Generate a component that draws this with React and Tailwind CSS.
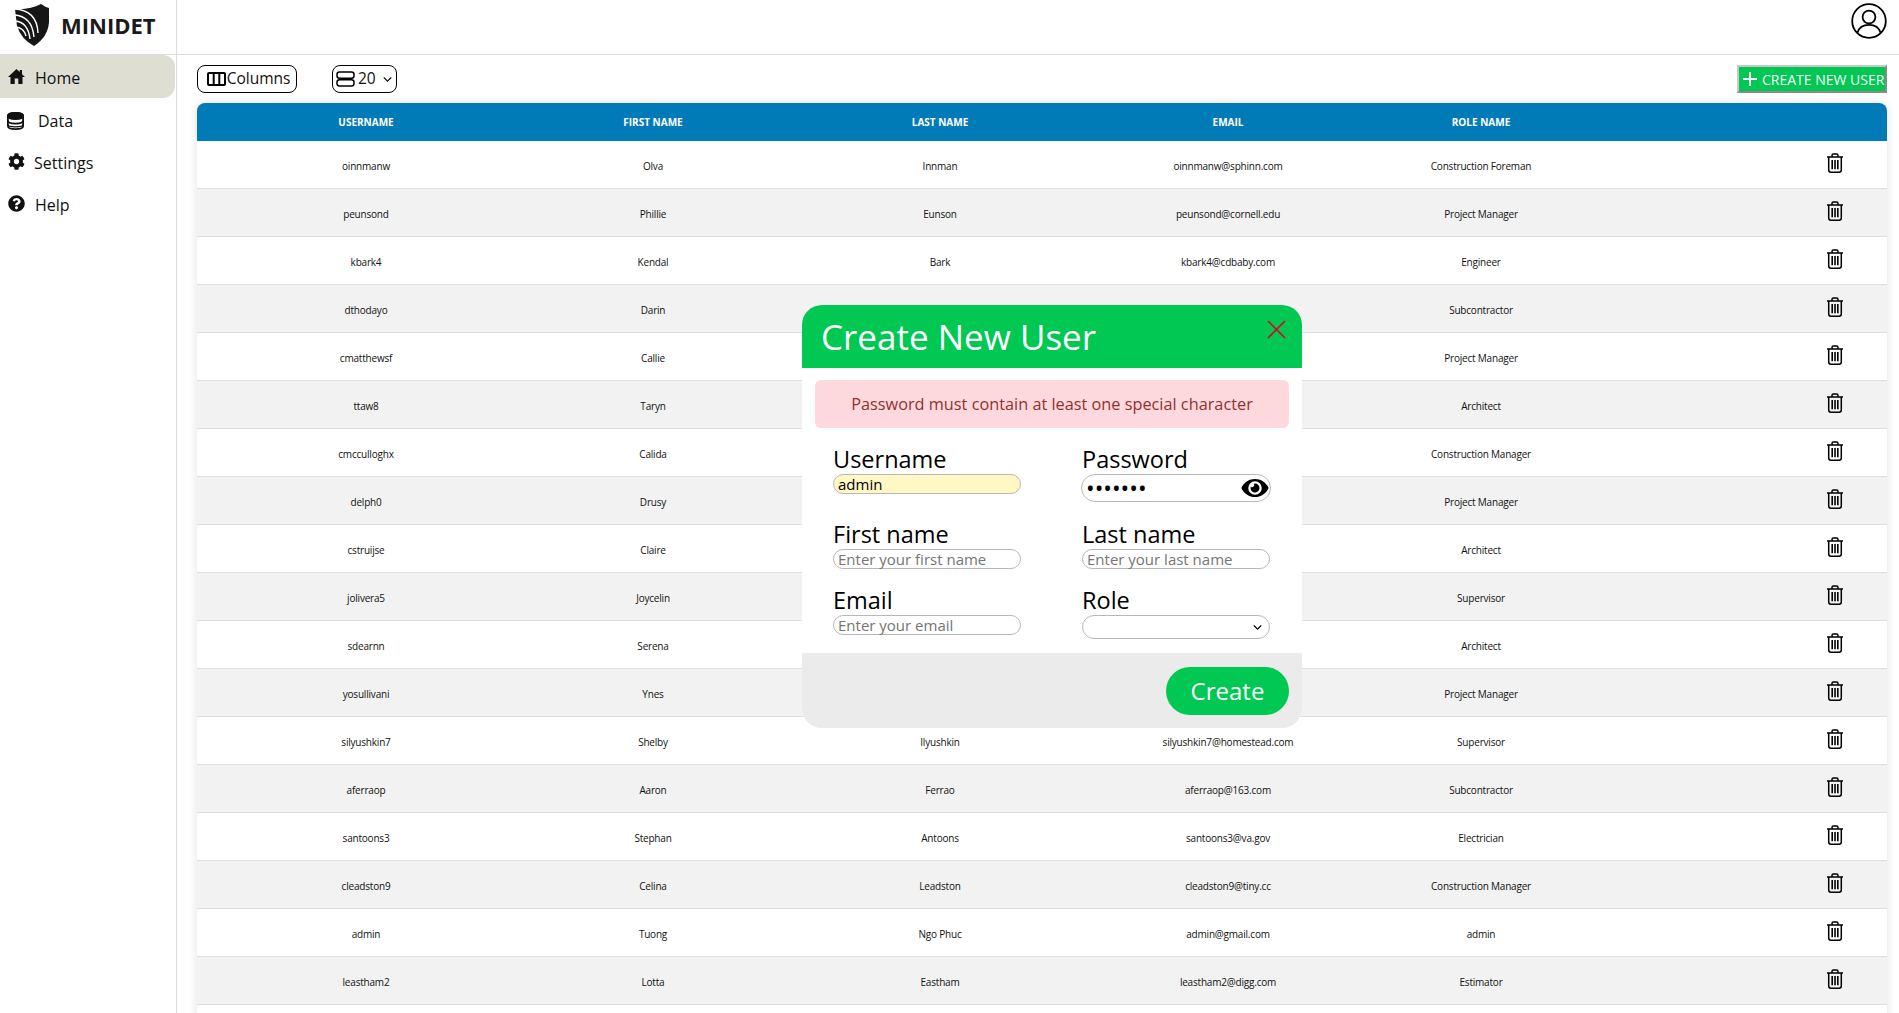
import React from "react";
import { FaCog, FaQuestionCircle, FaEye } from "react-icons/fa";
import { BsChevronDown } from "react-icons/bs";

const rows = [
  ["oinnmanw", "Olva", "Innman", "oinnmanw@sphinn.com", "Construction Foreman"],
  ["peunsond", "Phillie", "Eunson", "peunsond@cornell.edu", "Project Manager"],
  ["kbark4", "Kendal", "Bark", "kbark4@cdbaby.com", "Engineer"],
  ["dthodayo", "Darin", "", "", "Subcontractor"],
  ["cmatthewsf", "Callie", "", "", "Project Manager"],
  ["ttaw8", "Taryn", "", "", "Architect"],
  ["cmcculloghx", "Calida", "", "", "Construction Manager"],
  ["delph0", "Drusy", "", "", "Project Manager"],
  ["cstruijse", "Claire", "", "", "Architect"],
  ["jolivera5", "Joycelin", "", "", "Supervisor"],
  ["sdearnn", "Serena", "", "", "Architect"],
  ["yosullivani", "Ynes", "", "", "Project Manager"],
  ["silyushkin7", "Shelby", "Ilyushkin", "silyushkin7@homestead.com", "Supervisor"],
  ["aferraop", "Aaron", "Ferrao", "aferraop@163.com", "Subcontractor"],
  ["santoons3", "Stephan", "Antoons", "santoons3@va.gov", "Electrician"],
  ["cleadston9", "Celina", "Leadston", "cleadston9@tiny.cc", "Construction Manager"],
  ["admin", "Tuong", "Ngo Phuc", "admin@gmail.com", "admin"],
  ["leastham2", "Lotta", "Eastham", "leastham2@digg.com", "Estimator"],
];

const cols = "grid grid-cols-[338px_236px_338px_238px_268px_1fr] items-center text-center";
const font = { fontFamily: '"Open Sans", "Noto Sans", sans-serif' };

function Logo() {
  return (
    <svg width="36" height="42" viewBox="0 0 36 42" className="shrink-0">
      <path d="M1 5 Q16 6 27 0 Q31 3 35 4 L35 18 Q34 33 20 42 Q7 35 3 22 Z" fill="#161616" />
      <path d="M0 5 Q23 6 24 29 M0 11 Q18 12 20 33 M1 17 Q14 18 16 35 M2 23 Q10 24 12 32" stroke="#fff" strokeWidth="1.4" fill="none" />
    </svg>
  );
}

function HomeIcon() {
  return (
    <svg width="17" height="15" viewBox="0 0 17 15">
      <path d="M8.5 0 L0 8 H2.5 V15 H6.7 V9.5 H10.3 V15 H14.5 V8 H17 L14 5.2 V1 H11.7 V3 Z" fill="#111" />
    </svg>
  );
}

function DbIcon() {
  return (
    <svg width="19" height="20" viewBox="0 0 19 20" fill="none" stroke="#111" strokeWidth="2">
      <path d="M1 4.5 C1 2 5 1 9.5 1 C14 1 18 2 18 4.5 V15.5 C18 18 14 19 9.5 19 C5 19 1 18 1 15.5 Z" fill="#fff" />
      <path d="M1 4.5 C1 7 5 8 9.5 8 C14 8 18 7 18 4.5 C18 2 14 1 9.5 1 C5 1 1 2 1 4.5 Z" fill="#111" />
      <path d="M1 9.5 C1 12 5 13 9.5 13 C14 13 18 12 18 9.5" />
      <path d="M1 14 C1 16 5 16.6 9.5 16.6 C14 16.6 18 16 18 14" strokeWidth="1.4" />
    </svg>
  );
}

function ColumnsIcon() {
  return (
    <svg width="19" height="14" viewBox="0 0 19 14" fill="none" stroke="#000" strokeWidth="2" className="shrink-0">
      <rect x="1" y="1" width="17" height="12" rx="1" />
      <path d="M6.7 1 V13 M12.3 1 V13" />
    </svg>
  );
}

function RowsIcon() {
  return (
    <svg width="19" height="16" viewBox="0 0 19 16" fill="none" stroke="#000" strokeWidth="1.5" className="shrink-0">
      <rect x="1" y="1" width="17" height="6.3" rx="2.5" />
      <rect x="1" y="8.7" width="17" height="6.3" rx="2.5" />
    </svg>
  );
}

function TrashIcon() {
  return (
    <svg width="18" height="20" viewBox="0 0 18 20" fill="none" stroke="#000" strokeWidth="1.5">
      <path d="M1 4 H17" />
      <path d="M6 4 V2.5 Q6 1 7.5 1 H10.5 Q12 1 12 2.5 V4" />
      <path d="M2.7 4 V17 Q2.7 19.2 5 19.2 H13 Q15.3 19.2 15.3 17 V4" />
      <path d="M6.2 7 V16.2 M9 7 V16.2 M11.8 7 V16.2" strokeWidth="1.6" />
    </svg>
  );
}

function ProfileIcon() {
  return (
    <svg width="36" height="36" viewBox="0 0 36 36" fill="none" stroke="#000" strokeWidth="1.8">
      <circle cx="18" cy="18" r="16.8" />
      <circle cx="18" cy="14" r="6.4" />
      <path d="M6.6 29.5 C8 24.5 12 21.8 18 21.8 C24 21.8 28 24.5 29.4 29.5" />
    </svg>
  );
}

function NavItem({ icon, label, active, gap, className }) {
  return (
    <div className={`flex h-[43px] items-center rounded-r-[12px] pl-[8px] text-[16px] text-[#111] ${active ? "bg-[#deded3]" : ""} ${className || ""}`}>
      <span className="flex w-[17px] justify-center">{icon}</span>
      <span className={gap}>{label}</span>
    </div>
  );
}

function Field({ label, children, className }) {
  return (
    <div className={className}>
      <div className="h-[26px] text-[23.5px] leading-[22px] text-black">{label}</div>
      {children}
    </div>
  );
}

function TextInput({ placeholder, value, yellow }) {
  return (
    <div className={`h-[20px] w-[188px] rounded-full border border-[#b8b8b8] pl-[4px] text-[15px] leading-[19px] ${yellow ? "bg-[#fff8c4] text-black" : "bg-white text-[#757575]"}`}>
      {value || placeholder}
    </div>
  );
}

export default function App() {
  return (
    <div className="relative flex h-screen w-full flex-col overflow-hidden bg-white" style={font}>
      <header className="flex h-[55px] shrink-0 border-b border-[#dddddd]">
        <div className="flex w-[177px] shrink-0 items-center gap-[11px] border-r border-[#dddddd] pb-[4px] pl-[14px]">
          <Logo />
          <span className="text-[22px] font-bold text-[#1a1a1a]">MINIDET</span>
        </div>
        <div className="flex flex-1 justify-end pr-[12px] pt-[3px]">
          <ProfileIcon />
        </div>
      </header>

      <div className="flex min-h-0 flex-1">
        <aside className="w-[177px] shrink-0 border-r border-[#dddddd] pr-[1px]">
          <NavItem icon={<HomeIcon />} label="Home" active gap="ml-[10px] pt-[2px]" />
          <NavItem icon={<DbIcon />} label="Data" gap="ml-[14px]" className="-ml-[1px] mt-[1px]" />
          <NavItem icon={<FaCog className="-mt-[3px] h-[17px] w-[17px]" />} label="Settings" gap="ml-[9px]" className="-mt-[1px]" />
          <NavItem icon={<FaQuestionCircle className="-mt-[2px] h-[17px] w-[17px]" />} label="Help" gap="ml-[10px]" className="-mt-[1px]" />
        </aside>

        <main className="min-w-0 flex-1 pl-[20px] pr-[12px]">
          <div className="flex h-[48px] items-start pt-[10px]">
            <button className="flex h-[28px] w-[100px] items-center justify-center rounded-[8px] border border-black pl-[3px] text-[15.5px] text-[#111]">
              <ColumnsIcon />
              <span className="ml-[1px]">Columns</span>
            </button>
            <button className="ml-[35px] flex h-[28px] w-[65px] items-center rounded-[8px] border border-black pl-[3px] text-[15.5px] text-[#111]">
              <RowsIcon />
              <span className="ml-[3px]">20</span>
              <BsChevronDown className="ml-[7px] h-[9px] w-[9px]" strokeWidth="1.5" />
            </button>
            <button className="ml-auto flex h-[28px] w-[150px] items-center overflow-hidden whitespace-nowrap border-2 border-b-[#8a8a8a] border-l-[#c8c8c8] border-r-[#8a8a8a] border-t-[#c8c8c8] bg-[#00c853] pl-[4px] text-[14px] text-white">
              <svg width="14" height="14" viewBox="0 0 14 14" stroke="#fff" strokeWidth="2" className="mr-[5px] shrink-0">
                <path d="M7 0 V14 M0 7 H14" />
              </svg>
              CREATE NEW USER
            </button>
          </div>

          <div className="h-full rounded-t-[8px] bg-white shadow-[0_0_10px_rgba(0,0,0,0.12)]">
            <div className={`${cols} h-[38px] rounded-t-[8px] bg-[#017bb7] pt-[1px] text-[10px] font-bold text-white`}>
              <div>USERNAME</div>
              <div>FIRST NAME</div>
              <div>LAST NAME</div>
              <div>EMAIL</div>
              <div>ROLE NAME</div>
              <div />
            </div>
            {rows.map((r, i) => (
              <div key={r[0]} className={`${cols} h-[48px] border-b border-[#dedede] text-[10px] tracking-[-0.2px] text-[#111] ${i % 2 ? "bg-[#f2f2f2]" : "bg-white"}`}>
                <div className="pt-[4px]">{r[0]}</div>
                <div className="pt-[4px]">{r[1]}</div>
                <div className="pt-[4px]">{r[2]}</div>
                <div className="pt-[4px]">{r[3]}</div>
                <div className="pt-[4px]">{r[4]}</div>
                <div className="flex justify-end pb-[4px] pr-[43px]">
                  <TrashIcon />
                </div>
              </div>
            ))}
          </div>
        </main>
      </div>

      <div className="absolute left-[802px] top-[305px] w-[500px] overflow-hidden rounded-[20px] bg-white">
        <div className="flex h-[63px] items-center justify-between bg-[#00c853] pl-[19px] pr-[16px]">
          <span className="text-[35px] leading-none text-white">Create New User</span>
          <svg width="19" height="19" viewBox="0 0 19 19" stroke="#c8102e" strokeWidth="1.7" className="mb-[14px]">
            <path d="M1 1 L18 18 M18 1 L1 18" />
          </svg>
        </div>
        <div className="px-[13px] pt-[12px]">
          <div className="flex h-[48px] items-center justify-center rounded-[6px] bg-[#fdd9dd] text-[16.3px] text-[#93302f]">
            Password must contain at least one special character
          </div>
        </div>
        <div className="grid grid-cols-[249px_1fr] px-[31px] pt-[20px]">
          <Field label="Username" className="h-[75px]">
            <TextInput value="admin" yellow />
          </Field>
          <Field label="Password" className="h-[75px]">
            <div className="-ml-[1px] flex h-[28px] w-[190px] items-center justify-between rounded-full border border-[#b8b8b8] pl-[4px] pr-[1px]">
              <span className="text-[23px] leading-none text-black">•••••••</span>
              <FaEye className="h-[24px] w-[28px] text-black" />
            </div>
          </Field>
          <Field label="First name" className="h-[66px]">
            <TextInput placeholder="Enter your first name" />
          </Field>
          <Field label="Last name" className="h-[66px]">
            <TextInput placeholder="Enter your last name" />
          </Field>
          <Field label="Email" className="h-[64px]">
            <TextInput placeholder="Enter your email" />
          </Field>
          <Field label="Role" className="h-[64px]">
            <div className="flex h-[24px] w-[188px] items-center justify-end rounded-full border border-[#b8b8b8] pr-[7px]">
              <BsChevronDown className="h-[9px] w-[9px] text-black" strokeWidth="1.5" />
            </div>
          </Field>
        </div>
        <div className="flex h-[75px] items-center justify-end bg-[#ebebeb] pr-[13px]">
          <button className="flex h-[48px] w-[123px] items-center justify-center rounded-full bg-[#00c853] text-[24px] text-white">
            Create
          </button>
        </div>
      </div>
    </div>
  );
}
